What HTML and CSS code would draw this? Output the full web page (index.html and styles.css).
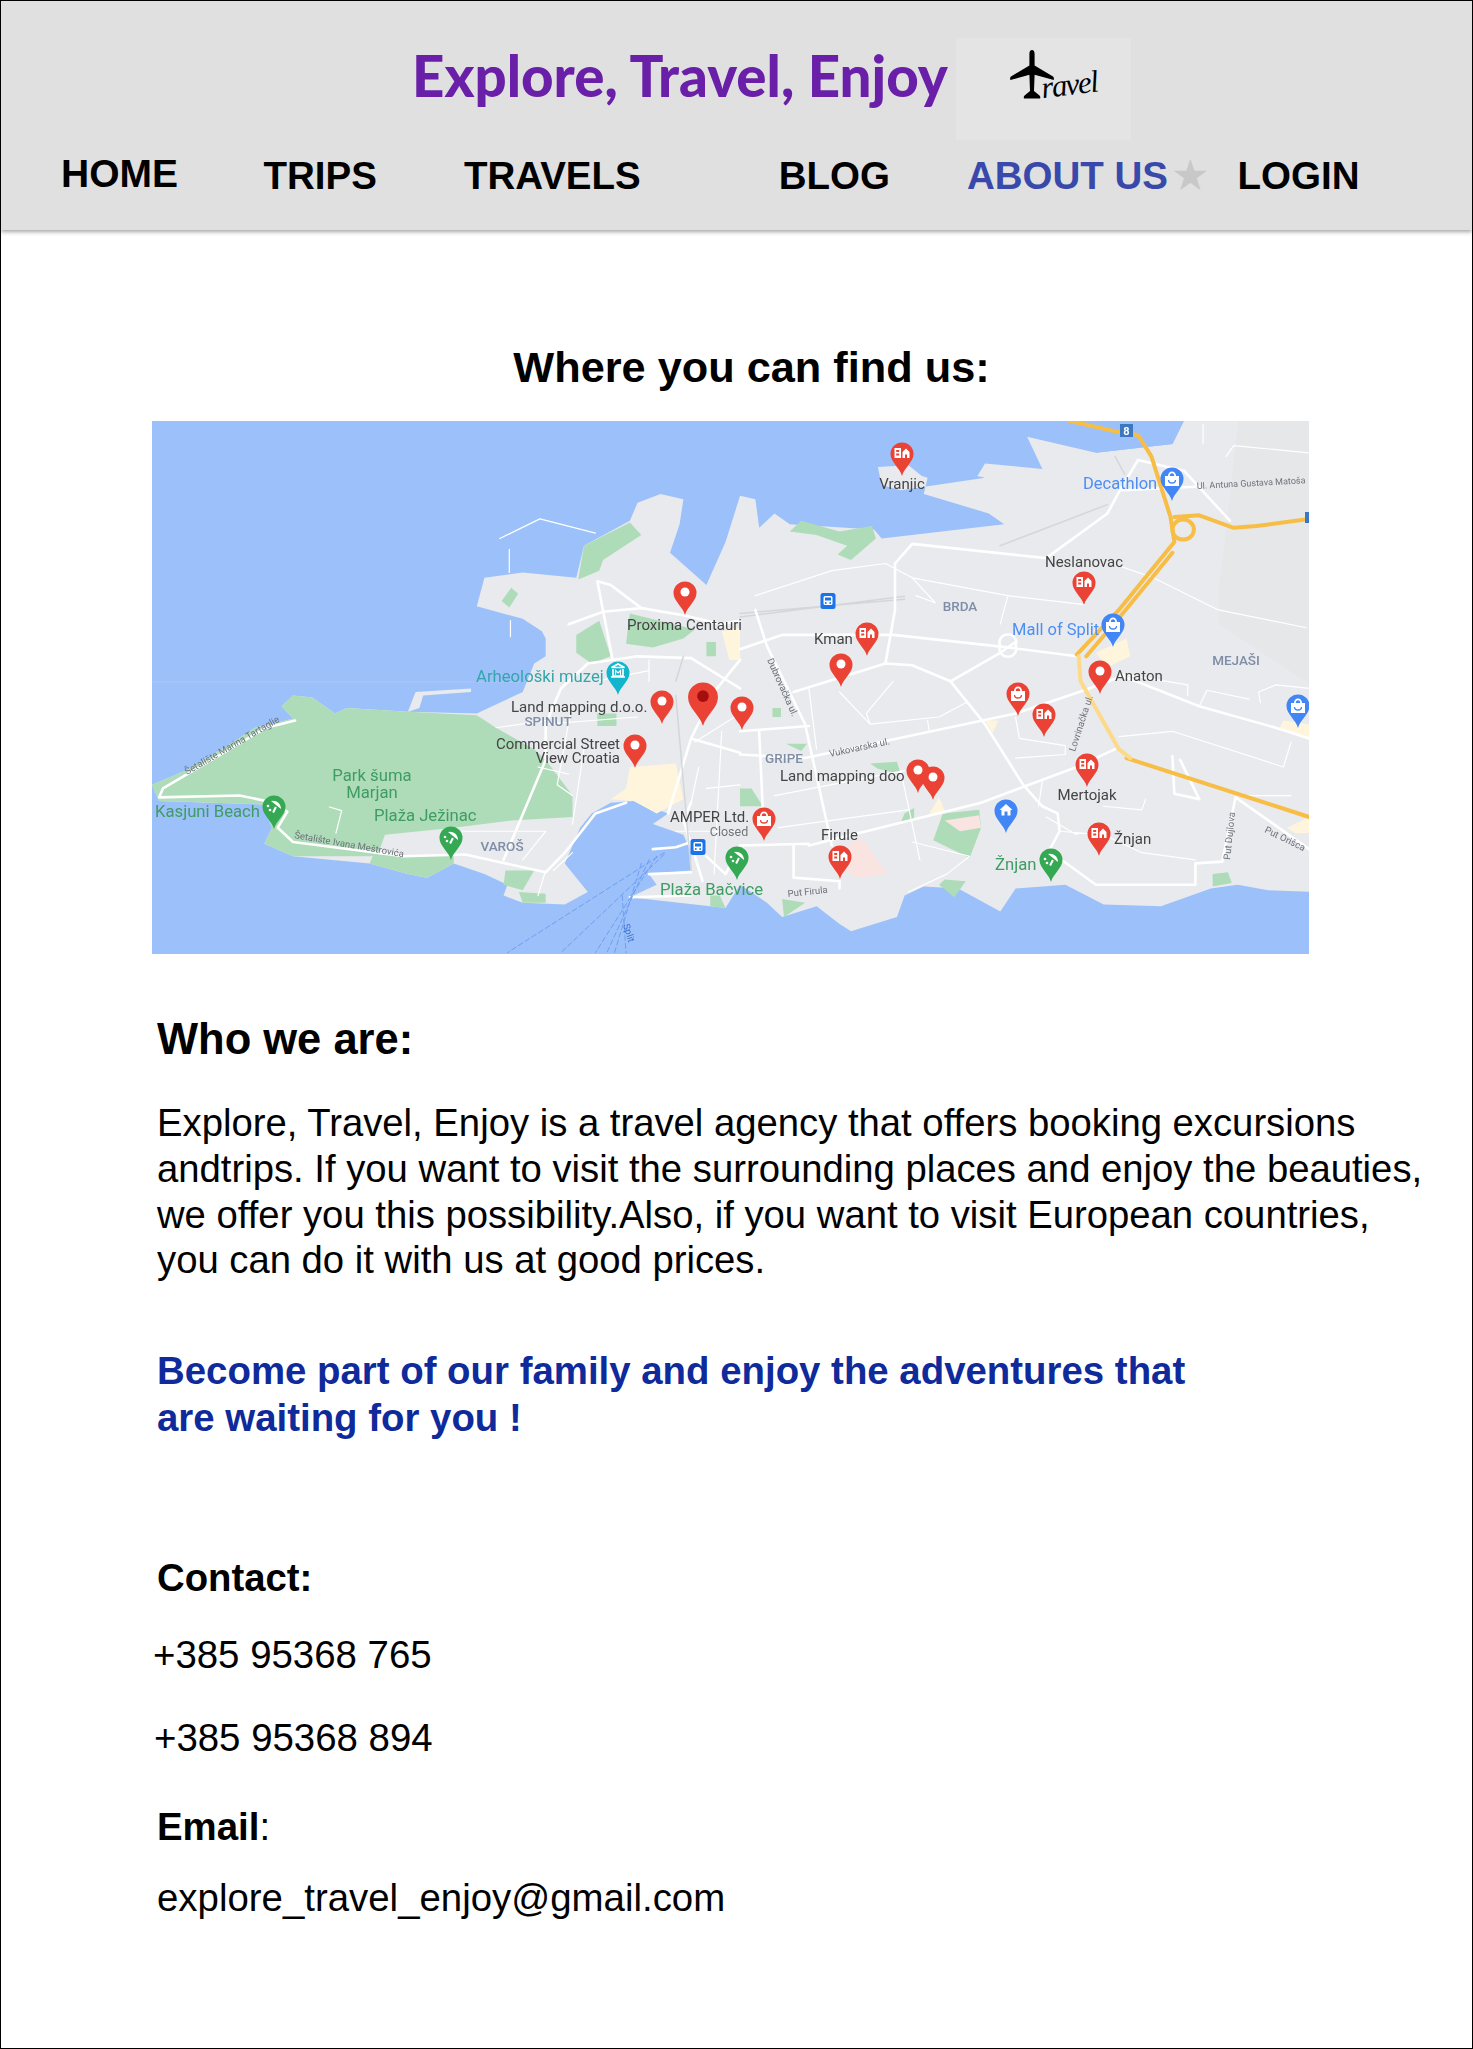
FILE: index.html
```html
<!DOCTYPE html>
<html lang="en">
<head>
<meta charset="utf-8">
<title>Explore, Travel, Enjoy</title>
<link rel="stylesheet" href="styles.css">
</head>
<body>
<div class="page">
  <header class="site-header">
    <div class="brand">
      <h1 class="brand-title"><span>Explore, Travel, Enjoy</span></h1>
      <div class="logo">
        <svg class="plane" viewBox="0 0 44 50" width="44" height="50">
          <path d="M22 0c1.600 0 2.600 1.600 2.600 4v11.500L43 26.500c1 .6 1 2 .8 3.500L24.600 24.800 24 41l5.500 4.500c.8.600 1 2 .6 3H14c-.5-1-.2-2.400.6-3L20 41l-.6-16.200L.3 30C0 28.500 0 27.100 1 26.500l18.400-11V4C19.400 1.600 20.400 0 22 0z"/>
        </svg>
        <span class="logo-word">ravel</span>
      </div>
    </div>
    <nav class="nav">
      <a class="nav-link nav-home">HOME</a>
      <a class="nav-link nav-trips">TRIPS</a>
      <a class="nav-link nav-travels">TRAVELS</a>
      <a class="nav-link nav-blog">BLOG</a>
      <a class="nav-link nav-about">ABOUT US</a>
      <span class="nav-star">★</span>
      <a class="nav-link nav-login">LOGIN</a>
    </nav>
  </header>

  <main class="content">
    <h2 class="find-title">Where you can find us:</h2>

    <svg class="map" viewBox="152 421 1157 533" width="1157" height="533">
      <defs>
        <clipPath id="map-clip"><rect x="152" y="421" width="1157" height="533"/></clipPath>
        <path id="pin" d="M0 0C-2-8-11.500-14-11.500-22A11.500 11.500 0 1 1 11.500-22C11.500-14 2-8 0 0Z"/>
        <g id="dot"><use href="#pin" fill="#ea4335"/><circle cy="-23" r="4.500" fill="#fff"/></g>
        <g id="hotel"><use href="#pin" fill="#ea4335"/><path fill="#fff" d="M-7.500-28h6.500v10h-6.500zM-5.800-26v2h3v-2zM-5.800-22.500v2h3v-2zM.5-18v-6l3.500-3.500 3.500 3.500v6h-2.500v-3.500h-2v3.500z"/></g>
        <g id="bag"><use href="#pin" fill="#ea4335"/><path fill="#fff" d="M-7-25h14v10h-14zM-4-25a4 4.500 0 0 1 8 0h-1.800a2.200 2.800 0 0 0-4.400 0z"/><path fill="none" stroke="#ea4335" stroke-width="1.300" d="M-3.500-21a3.500 3 0 0 0 7 0"/></g>
        <g id="shop"><use href="#pin" fill="#4285f4"/><path fill="#fff" d="M-7-25h14v10h-14zM-4-25a4 4.500 0 0 1 8 0h-1.800a2.200 2.800 0 0 0-4.400 0z"/><path fill="none" stroke="#4285f4" stroke-width="1.300" d="M-3.500-21a3.500 3 0 0 0 7 0"/></g>
        <g id="home"><use href="#pin" fill="#4285f4"/><path fill="#fff" d="M0-29l6.500 6h-2v5.500H1.500v-4h-3v4h-3v-5.500h-2z"/></g>
        <g id="beach"><use href="#pin" fill="#34a853"/><path fill="#fff" d="M-3-28a8 8 0 0 1 10 8zM1-22.500l1.800 1-2.800 5.500-1.800-1z"/><circle cx="-6" cy="-23" r="1.300" fill="#fff"/><circle cx="-4" cy="-19" r="1.300" fill="#fff"/></g>
        <g id="museum"><use href="#pin" fill="#12b5cb"/><path fill="none" stroke="#fff" stroke-width="1.600" d="M-6.500-27.500L0-31l6.500 3.500zM-5-26v7h10v-7M-7-18h14"/><path fill="none" stroke="#fff" stroke-width="1.200" d="M-2.500-20v-4.500L0-22l2.500-2.500V-20"/></g>
        <g id="transit"><rect x="-7.500" y="-8" width="15" height="16" rx="2.500" fill="#1a73e8"/><rect x="-4.500" y="-5" width="9" height="9" rx="1.500" fill="#fff"/><rect x="-3" y="-3.500" width="6" height="3" fill="#1a73e8"/><circle cx="-2.200" cy="2" r=".9" fill="#1a73e8"/><circle cx="2.200" cy="2" r=".9" fill="#1a73e8"/></g>
      </defs>
      <g clip-path="url(#map-clip)">
        <rect class="water" x="152" y="421" width="1157" height="533"/>
        <line x1="152" x2="520" y1="682" y2="682" class="seam"/>

        <!-- west half, traced in crop coordinates -->
        <g transform="translate(140 410) scale(.3827 .357)">
          <path class="land" d="M880 850L1000 790 1030 710 1060 690 1060 640 1050 620 1000 585 880 550 900 470 1000 455 1140 470 1160 380 1280 310 1300 260 1360 235 1420 250 1410 320 1385 400 1480 490 1530 370 1568 240 1608 250 1618 330 1658 290 1698 320 1918 335 1938 360 2258 320 2218 290 2048 235 2058 190 2043 185 2008 155 1928 160 1938 210 1988 225 2208 190 2188 185 2208 150 2358 165 2318 75 2498 120 2698 95 2728 30 3060 30 3060 1350 2948 1345 2868 1330 2798 1340 2668 1390 2518 1385 2418 1330 2358 1335 2288 1340 2248 1405 2138 1340 2048 1335 1998 1360 1978 1420 1858 1460 1828 1440 1768 1390 1678 1420 1638 1380 1568 1330 1530 1395 1490 1390 1280 1365 1350 1330 1330 1300 1440 1290 1440 1240 1420 1190 1340 1160 1380 1130 1290 1095 1230 1100 1180 1130 1150 1170 1110 1270 1170 1350 1110 1385 1000 1380 950 1360 960 1330 900 1300 820 1270 750 1310 700 1300 600 1270 400 1250 325 1215 345 1170 320 1105 50 1095 31 1050 120 1010 230 940 300 890 400 865 370 830 400 800 450 805 510 850 540 835 700 845 880 850Z"/>
          <path class="land" d="M700 845L720 790 865 780 865 790 740 800 730 835Z"/>
          <path class="hill" d="M2820 500L2870 30 3060 30 3060 770 2820 600Z"/>
          <path class="park" d="M31 1050L120 1010 230 940 300 890 400 865 370 830 400 800 450 805 510 850 540 835 700 845 880 855 930 890 1030 950 1060 980 1130 1080 1130 1140 970 1150 820 1170 640 1190 620 1250 400 1250 325 1215 345 1170 320 1105 50 1095Z"/>
          <path class="park" d="M610 1245L820 1250 820 1270 750 1310 700 1300 600 1270Z"/>
          <path class="park" d="M1145 475L1160 380 1280 315 1310 350 1210 420 1200 450ZM945 535L970 498 988 515 965 553ZM1270 655L1280 570 1450 615 1420 640 1340 665ZM1140 630L1200 590 1230 690 1180 710 1140 680ZM955 1290L1030 1290 1000 1345 950 1330ZM990 1350L1060 1355 1060 1380 1000 1380ZM1480 650h25v40h-25zM1195 850h50v35h-50zM1490 1360L1515 1360 1530 1395 1490 1390Z"/>
          <path class="beach-sand" d="M1280 1000L1400 990 1420 1090 1350 1130 1290 1095 1230 1090 1270 1060ZM1520 620L1568 610 1568 700 1540 700Z"/>
          <g class="road">
            <path d="M1195 480L1235 700M1195 480L1230 490 1310 555M1120 600L1210 565 1310 555 1420 575 1520 600 1568 590"/>
            <path d="M1100 780L1170 710 1300 690 1440 695 1568 780M950 1260L1060 980 1060 880 1100 780"/>
            <path d="M405 870L330 890 60 1060 50 1085 260 1080 330 1095 385 1125 360 1170 400 1210 690 1250 850 1245 1060 1295 1110 1240 1190 1130 1270 1100"/>
            <path d="M1568 700L1500 790 1440 920 1568 960M1440 920L1380 1130M1340 1230L1400 1225 1440 1210 1530 1300 1568 1220M1280 1365L1440 1360M1330 1300L1440 1295"/>
            <path d="M1440 1100L1420 1150 1450 1250 1470 1320"/>
          </g>
          <g class="road-thin">
            <path d="M1060 880L1300 860M930 890L1060 870M1130 820L1090 1050 1130 1080M1190 760L1330 730M1330 700V760M1040 1000L1120 1020M1160 950L1130 1160M1460 1000L1440 1100M1568 850L1450 930M840 1180L1060 1180 1000 1260M1060 1290L1040 1360M1520 900L1500 1300M1568 1050L1480 1060M1400 1180H1568M1130 1240L1080 1290M495 1112L527 1122 512 1185M940 360L1045 305 1190 345M965 390V455M968 590V635"/>
          </g>
          <g class="rail"><path d="M1400 800L1440 1290" /><path d="M1420 690L1400 760"/></g>
          <g class="ferry">
            <path d="M1370 1240L960 1520M1370 1245L1100 1520M1350 1250L1190 1520M1330 1260L1220 1520M1310 1270L1240 1520M1260 1360L1270 1520"/>
          </g>
        </g>

        <!-- east half, traced in crop coordinates -->
        <g transform="translate(740 410) scale(.3827 .357)">
          <path class="park" d="M130 340L160 310 260 340 345 325 355 360 290 420 255 405 280 380 200 350ZM85 835h22v25h-22zM120 935L175 935 160 955ZM505 1205L530 1130 625 1120 630 1170 600 1255ZM520 1330L535 1315 590 1320 560 1365ZM1235 1300L1275 1295 1285 1325 1235 1335ZM110 1370L170 1380 115 1420ZM0 1060L30 1060 60 1110H0ZM340 990L410 985 420 1020 360 1005ZM430 1130L455 1115 455 1150 420 1155Z"/>
          <path class="clinic" d="M535 1150L625 1135 630 1170 575 1180ZM290 1210L320 1200 385 1300 310 1310 270 1290Z"/>
          <path class="beach-sand" d="M495 1130L520 1085 538 1130ZM640 870L675 870 660 905ZM1430 1170L1487 1140 1487 1185 1450 1185ZM1420 870L1487 880 1487 920 1410 890ZM930 680L1010 640 1020 690 960 720Z"/>
          <g class="rail">
            <path d="M0 570L430 530M0 580L430 522M680 380L960 265M980 130L1005 180"/>
          </g>
          <g class="road">
            <path d="M0 670L110 630 400 630 700 665 880 690M680 660a22 22 0 1 0 40 0 22 22 0 1 0-40 0"/>
            <path d="M0 900L180 885M140 790L380 710 450 715 550 760 640 880 740 1050 790 1110 830 1130 835 1180 810 1230"/>
            <path d="M0 965L170 975 720 850 900 785 1000 745 1200 830 1400 890 1487 920"/>
            <path d="M180 1220L630 1100 880 1000 980 950M0 1220L180 1215"/>
            <path d="M380 710L405 560 405 430 450 375 800 415 960 290 990 230 1040 140M550 760L680 680 720 650"/>
            <path d="M1040 140L1160 170 1280 310M1000 225L1190 215M840 1260L930 1330 1190 1330 1190 1270 1260 1265 1295 1085 1487 1230"/>
            <path d="M1130 970L1135 1075 1200 1090 1150 980M40 560L70 660 170 880 240 1220M50 900L60 1130M140 1220L140 1310 260 1320 260 1340"/>
          </g>
          <g class="road-thin">
            <path d="M40 520L240 450 380 430 450 470 510 540 460 520M450 470L700 520 900 545M700 520L680 600M260 790L340 880 330 850 400 760M340 880L520 860 590 820M720 860L730 920 850 940 850 965 720 975M490 870L495 900M1000 740L1170 770 1170 800M1200 830L1220 785 1330 810M1360 820L1355 790 1400 770 1487 780M1440 1080L1320 1080M990 915L1130 900M1130 900L1420 1000 1440 930M950 1110L1050 1120 1060 1090M835 1180L950 1190 1050 1240 1190 1260M450 1210L600 1250 540 1300 440 1350M790 1040L780 1110M90 1080L430 1010M100 1170L440 1120M180 780L200 950M1270 130L1290 100 1487 120M1210 40L1210 95M1480 610L1250 560 1080 470 1000 440M880 1190L800 1140M420 1010L470 1260"/>
          </g>
          <path class="water-fill" d="M930 120L1130 95 1160 30H1155L1120 88 930 110Z"/>
          <g class="highway">
            <path d="M860 30L980 60 1040 70 1075 130 1125 300 1135 370 990 560 880 685"/>
            <path d="M905 690L1000 570 1130 400M1135 300L1200 295 1290 330 1350 325 1487 305"/>
            <circle cx="1158" cy="335" r="28"/>
            <path d="M1010 975L1487 1140"/>
          </g>
          <path class="highway-pale" d="M885 690L890 760 990 950 1020 975"/>
        </g>

        <g class="lbl-small">
          <text transform="translate(187 775) rotate(-30)">Šetalište Marina Tartaglie</text>
          <text transform="translate(294 838) rotate(10)">Šetalište Ivana Meštrovića</text>
          <text class="lbl-matosa" transform="translate(1197 489) rotate(-3)">Ul. Antuna Gustava Matoša</text>
          <text transform="translate(830 757) rotate(-12)">Vukovarska ul.</text>
          <text transform="translate(767 660) rotate(66)">Dubrovačka ul.</text>
          <text transform="translate(1075 752) rotate(-72)">Lovrinačka ul.</text>
          <text transform="translate(1230 860) rotate(-84)">Put Dujlova</text>
          <text transform="translate(1264 832) rotate(26)">Put Orišca</text>
          <text transform="translate(788 897) rotate(-6)">Put Firula</text>
          <text class="lbl-ferry" transform="translate(623 925) rotate(72)">Split</text>
        </g>

        <g class="lbl">
          <text x="902" y="489" text-anchor="middle">Vranjic</text>
          <text x="1084" y="567" text-anchor="middle">Neslanovac</text>
          <text x="814" y="644">Kman</text>
          <text x="1115" y="681">Anaton</text>
          <text x="627" y="630">Proxima Centauri</text>
          <text x="511" y="712">Land mapping d.o.o.</text>
          <text x="620" y="749" text-anchor="end">Commercial Street</text>
          <text x="620" y="763" text-anchor="end">View Croatia</text>
          <text x="780" y="781">Land mapping doo</text>
          <text x="1087" y="800" text-anchor="middle">Mertojak</text>
          <text x="670" y="822">AMPER Ltd.</text>
          <text class="lbl-closed" x="729" y="836" text-anchor="middle">Closed</text>
          <text x="821" y="840">Firule</text>
          <text x="1114" y="844">Žnjan</text>
        </g>
        <g class="lbl lbl-area">
          <text x="960" y="611" text-anchor="middle">BRDA</text>
          <text x="1236" y="665" text-anchor="middle">MEJAŠI</text>
          <text x="548" y="726" text-anchor="middle">SPINUT</text>
          <text x="502" y="851" text-anchor="middle">VAROŠ</text>
          <text x="784" y="763" text-anchor="middle">GRIPE</text>
        </g>
        <g class="lbl lbl-blue">
          <text x="1083" y="489">Decathlon</text>
          <text x="1012" y="635">Mall of Split</text>
        </g>
        <g class="lbl lbl-teal"><text x="476" y="682">Arheološki muzej</text></g>
        <g class="lbl lbl-green">
          <text x="372" y="781" text-anchor="middle">Park šuma</text>
          <text x="372" y="798" text-anchor="middle">Marjan</text>
          <text x="374" y="821">Plaža Ježinac</text>
          <text x="155" y="817">Kasjuni Beach</text>
          <text x="995" y="870">Žnjan</text>
          <text x="660" y="895">Plaža Bačvice</text>
        </g>

        <use href="#transit" x="828" y="601"/>
        <use href="#transit" x="698" y="847"/>
        <rect x="1120" y="424" width="13" height="13" fill="#3b78c4"/>
        <text class="shield" x="1126.500" y="435" text-anchor="middle">8</text>
        <rect x="1305" y="512" width="4" height="11" fill="#3b78c4"/>

        <use href="#dot" x="685" y="615"/>
        <use href="#dot" x="662" y="724"/>
        <g transform="translate(703 726) scale(1.300)"><use href="#pin" fill="#ea4335"/><circle cy="-23" r="4.500" fill="#a50e0e"/></g>
        <use href="#dot" x="742" y="730"/>
        <use href="#dot" x="635" y="768"/>
        <use href="#dot" x="841" y="687"/>
        <use href="#dot" x="1100" y="694"/>
        <use href="#dot" x="933" y="800"/>
        <use href="#dot" x="918" y="793"/>
        <use href="#hotel" x="902" y="476"/>
        <use href="#hotel" x="1084" y="605"/>
        <use href="#hotel" x="867" y="656"/>
        <use href="#hotel" x="1044" y="737"/>
        <use href="#hotel" x="1087" y="787"/>
        <use href="#hotel" x="1099" y="856"/>
        <use href="#hotel" x="840" y="879"/>
        <use href="#bag" x="1018" y="716"/>
        <use href="#bag" x="764" y="841"/>
        <use href="#shop" x="1172" y="501"/>
        <use href="#shop" x="1113" y="647"/>
        <use href="#shop" x="1298" y="728"/>
        <use href="#home" x="1006" y="833"/>
        <use href="#beach" x="274" y="829"/>
        <use href="#beach" x="451" y="860"/>
        <use href="#beach" x="737" y="880"/>
        <use href="#beach" x="1051" y="882"/>
        <use href="#museum" x="618" y="695"/>
      </g>
    </svg>

    <section class="about">
      <h2 class="who-title">Who we are:</h2>
      <p class="about-text">Explore, Travel, Enjoy is a travel agency that offers booking excursions andtrips. If you want to visit the surrounding places and enjoy the beauties, we offer you this possibility.Also, if you want to visit European countries, you can do it with us at good prices.</p>
      <p class="about-cta">Become part of our family and enjoy the adventures that are waiting for you !</p>
    </section>

    <section class="contact">
      <h3 class="contact-title">Contact:</h3>
      <p class="phone">+385 95368 765</p>
      <p class="phone phone-second">+385 95368 894</p>
      <p class="email-title"><b>Email</b>:</p>
      <p class="email">explore_travel_enjoy@gmail.com</p>
    </section>
  </main>
</div>
</body>
</html>
```
FILE: styles.css
```css
* { box-sizing: border-box; }
html, body { margin: 0; padding: 0; background: #fff; }
body { font-family: "Liberation Sans", Arial, sans-serif; color: #000; }

.page {
  width: 1473px;
  height: 2049px;
  border: 1px solid #000;
  overflow: hidden;
}

.site-header {
  height: 229px;
  background: #e0e0e0;
  box-shadow: 0 2px 4px rgba(0, 0, 0, .35);
  padding-top: 37px;
}

.brand { display: flex; height: 102px; padding-left: 411px; }
.brand-title {
  width: 544px;
  margin: 0;
  font: 900 58px/74px Lato, sans-serif;
  color: #6a1fa8;
  white-space: nowrap;
}
.brand-title span { display: inline-block; transform: scaleX(.973); transform-origin: left center; }

.logo {
  position: relative;
  width: 175px;
  height: 102px;
  background: #e4e4e4;
}
.plane { position: absolute; left: 54px; top: 12px; }
.logo-word {
  position: absolute;
  left: 85px;
  top: 27px;
  font: italic 400 31px/40px "Liberation Serif", serif;
  letter-spacing: -1.500px;
  transform: rotate(-7deg);
}

.nav { display: flex; align-items: flex-start; padding-left: 60px; margin-top: 14px; }
.nav-link {
  font-size: 38.500px;
  line-height: 44px;
  font-weight: 700;
  color: #000;
  white-space: nowrap;
}
.nav-home { margin-top: -2px; font-size: 39px; }
.nav-trips { margin-left: 85.500px; }
.nav-travels { margin-left: 87px; }
.nav-blog { margin-left: 138px; }
.nav-about { margin-left: 77px; color: #3949ab; }
.nav-star { font-size: 43px; line-height: 42px; color: #c8c8c8; font-family: "DejaVu Sans", sans-serif; margin-left: 3px; }
.nav-login { margin-left: 28px; }

.content { position: relative; }

.find-title {
  margin: 0;
  padding: 112px 0 0 30px;
  text-align: center;
  font-size: 43.300px;
  line-height: 50px;
  font-weight: 700;
}

.map { display: block; margin: 29px 0 0 151px; filter: blur(.35px); }
.water { fill: #9cc0f9; }
.seam { stroke: #a9c8fa; stroke-width: 1; }
.land { fill: #e8eaed; }
.hill { fill: #e6e7e9; }
.park { fill: #aedcb8; }
.beach-sand { fill: #fef5dc; }
.clinic { fill: #f9e4e2; }
.water-fill { fill: #9cc0f9; }
.road path, .road-thin path, .rail path, .ferry path, .highway path, .highway circle, .highway-pale {
  fill: none;
  vector-effect: non-scaling-stroke;
  stroke-linejoin: round;
  stroke-linecap: round;
}
.road path { stroke: #fff; stroke-width: 2.600px; }
.road-thin path { stroke: #fff; stroke-width: 1.200px; }
.rail path { stroke: #d4d6da; stroke-width: 1.500px; }
.ferry path { stroke: #6f9ff0; stroke-width: 1px; stroke-dasharray: 5 3; }
.highway path, .highway circle { stroke: #f7bd45; stroke-width: 4px; }
.highway-pale { stroke: #fdd98a; stroke-width: 4px; }

.lbl text { font: 400 15px Roboto, sans-serif; fill: #444; stroke: none; }
.lbl .lbl-closed { font-size: 12.500px; fill: #70757a; }
.lbl-area text { font-weight: 500; font-size: 13.500px; fill: #7f8da6; }
.lbl-blue text { font-size: 16.500px; fill: #4d8ef5; }
.lbl-teal text { font-size: 16.700px; fill: #34a6ab; }
.lbl-green text { font-size: 16.700px; fill: #3f9c63; }
.lbl-small text { font: 400 9.500px Roboto, sans-serif; fill: #6c727a; }
.lbl-small .lbl-ferry { fill: #3b6fc9; }
.lbl-small .lbl-matosa { font-size: 9px; }
.shield { font: 700 11px Roboto, sans-serif; fill: #fff; }

.about { padding: 60px 42px 0 156px; }
.who-title {
  margin: 0;
  font-size: 43.500px;
  line-height: 50px;
  font-weight: 700;
}
.about-text {
  margin: 36px 0 0;
  font-size: 38.250px;
  line-height: 45.800px;
}
.about-cta {
  margin: 64px 0 0;
  width: 1060px;
  font-size: 38.400px;
  line-height: 47px;
  font-weight: 700;
  color: #0f2a9b;
}

.contact { padding: 114px 0 0 156px; }
.contact-title { margin: 0; font-size: 38.300px; line-height: 46px; font-weight: 700; }
.phone { margin: 31px 0 0 -4px; font-size: 38.400px; line-height: 46px; }
.phone-second { margin: 37px 0 0 -3px; }
.email-title { margin: 43px 0 0; font-size: 38.400px; line-height: 46px; }
.email { margin: 25px 0 0; font-size: 38.400px; line-height: 46px; }
```
